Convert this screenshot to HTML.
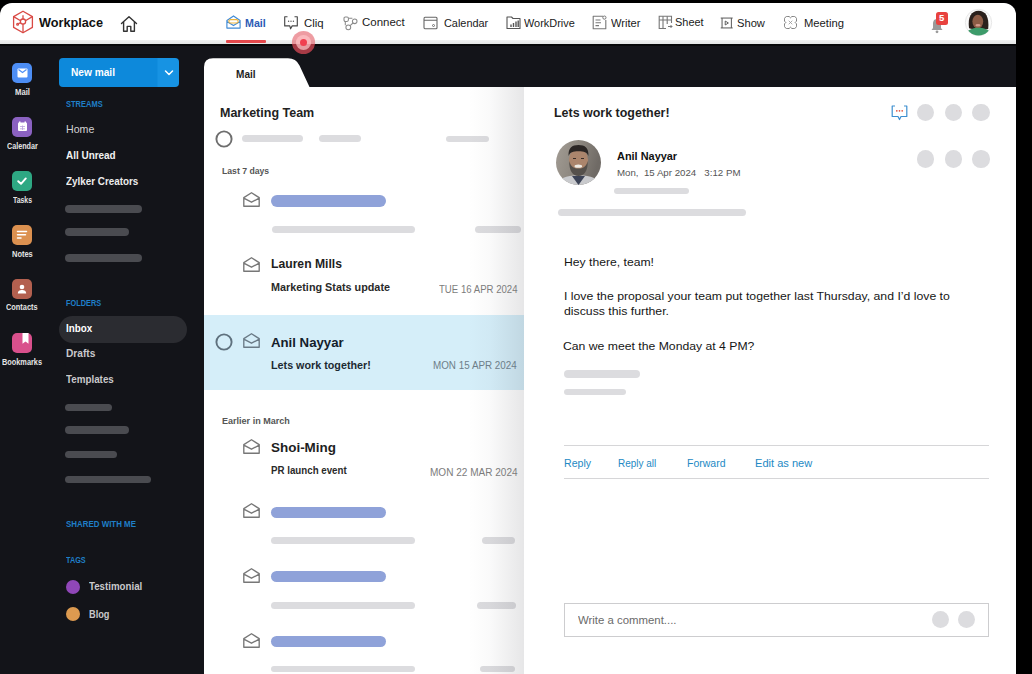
<!DOCTYPE html>
<html><head><meta charset="utf-8"><style>
html,body{margin:0;padding:0;}
body{width:1032px;height:674px;background:#000;position:relative;overflow:hidden;font-family:"Liberation Sans", sans-serif;}
.a{position:absolute;}
.tx{position:absolute;white-space:nowrap;line-height:1;transform-origin:0 0;}
.bar{position:absolute;border-radius:4px;background:#dcdcdf;}
.dbar{position:absolute;border-radius:4px;background:#4a4b50;}
.bbar{position:absolute;border-radius:6px;background:#8fa2d9;}
.circ{position:absolute;border-radius:50%;background:#dcdcdf;}
</style></head><body>
<!-- screen -->
<div class="a" style="left:0;top:3px;width:1016px;height:700px;background:#131419;border-radius:12px 12px 0 0;overflow:hidden;">
  <div class="a" style="left:0;top:0;width:1016px;height:44px;background:linear-gradient(to bottom,#fff 0px,#fff 37.4px,#eef0f0 37.4px,#e3e5e5 41px,#050608 41px,#07080a 42.6px,#131419 42.6px);"></div>
</div>
<!-- logo -->
<svg class="a" style="left:12px;top:10px" width="22" height="24" viewBox="0 0 22 24">
  <g fill="none" stroke="#d94a45" stroke-width="1.3" stroke-linejoin="round">
    <path d="M11 1.2 L20.4 6.6 V17.4 L11 22.8 L1.6 17.4 V6.6 Z"/>
    <path d="M1.6 6.6 L8.6 10.8 M20.4 6.6 L13.4 10.8 M11 13.4 V22.8"/>
    <circle cx="11" cy="11.6" r="2.6"/>
    <path d="M11 5.2 V9"/>
    <circle cx="5.6" cy="14.2" r="0.9"/>
    <path d="M6.4 13.6 L8.8 12.6"/>
  </g>
</svg>
<!-- home icon -->
<svg class="a" style="left:120px;top:15px" width="18" height="18" viewBox="0 0 18 18">
  <path d="M1.5 8.6 L9 1.8 L16.5 8.6 M3.6 7 V16.2 H7.2 V11.4 H10.8 V16.2 H14.4 V7" fill="none" stroke="#333" stroke-width="1.4" stroke-linejoin="round" stroke-linecap="round"/>
</svg>
<!-- nav icons -->
<svg class="a" style="left:225.5px;top:15.3px" width="15" height="14" viewBox="0 0 15 14">
  <path d="M0.9 5.4 L7.5 0.9 L14.1 5.4 V13.1 H0.9 Z M0.9 6.6 L7.5 10.6 L14.1 6.6" fill="none" stroke="#3f8ad6" stroke-width="1.15" stroke-linejoin="round"/>
  <rect x="2.9" y="4.6" width="9.2" height="3.4" rx="1.6" fill="none" stroke="#efb53c" stroke-width="1.1"/>
</svg>
<svg class="a" style="left:283.8px;top:15.8px" width="14" height="14" viewBox="0 0 14 14">
  <path d="M3.5 0.7 H0.7 V9.9 H5.8 L6.6 12.8 L8.2 9.9 H13.3 V0.7 H10.5" fill="none" stroke="#484848" stroke-width="1.15" stroke-linejoin="round"/>
  <circle cx="4.6" cy="5.2" r="0.7" fill="#555"/><circle cx="7" cy="5.2" r="0.7" fill="#555"/><circle cx="9.4" cy="5.2" r="0.7" fill="#555"/>
</svg>
<svg class="a" style="left:343px;top:15.5px" width="15" height="15" viewBox="0 0 15 15">
  <g fill="none" stroke="#8a8a8a" stroke-width="1.05">
    <rect x="1" y="1" width="4.4" height="4.4" rx="1.3"/>
    <circle cx="11.7" cy="5.3" r="2.3"/>
    <circle cx="5.3" cy="11.3" r="2.4"/>
    <path d="M5.6 2.2 H9.4 M2.3 5.6 V9.2 M7.1 9.6 L10 7"/>
  </g>
</svg>
<svg class="a" style="left:423px;top:16px" width="15" height="14" viewBox="0 0 15 14">
  <path d="M2 1.2 H13 Q14 1.2 14 2.2 V11.8 Q14 12.8 13 12.8 H2.4 Q1 12.8 1 11.4 V3 Q1 1.2 2 1.2 Z M1 4.2 H14" fill="none" stroke="#666" stroke-width="1.1"/>
  <circle cx="10.5" cy="9.5" r="1" fill="none" stroke="#666" stroke-width="0.9"/>
</svg>
<svg class="a" style="left:506px;top:15px" width="15" height="15" viewBox="0 0 15 15">
  <path d="M1 13.5 V2 H5.5 L7 3.5 H14 V13.5 Z" fill="none" stroke="#555" stroke-width="1.1" stroke-linejoin="round"/>
  <path d="M5 12 V9.5 M7.5 12 V8 M10 12 V6.5 M12.2 12 V5.5" stroke="#555" stroke-width="1.4"/>
</svg>
<svg class="a" style="left:592px;top:15px" width="15" height="15" viewBox="0 0 15 15">
  <path d="M11 1.2 H1.2 V13.8 H13.8 V5" fill="none" stroke="#777" stroke-width="1.1" stroke-linejoin="round"/>
  <path d="M3.5 5 H8.5 M3.5 7.8 H9 M3.5 10.6 H7" stroke="#777" stroke-width="1.1"/>
  <circle cx="12.4" cy="2.6" r="1.6" fill="none" stroke="#777" stroke-width="1"/>
</svg>
<svg class="a" style="left:658px;top:15px" width="15" height="15" viewBox="0 0 15 15">
  <path d="M13.5 8 V1.2 H1.2 V13.5 H8" fill="none" stroke="#777" stroke-width="1.1"/>
  <path d="M1.2 5 H13.5 M5 1.2 V13.5 M9.2 1.2 V9" stroke="#777" stroke-width="1.1"/>
  <path d="M10 11.5 H14 M12.5 10 L14 11.5 L12.5 13" fill="none" stroke="#777" stroke-width="1"/>
</svg>
<svg class="a" style="left:720.3px;top:16.6px" width="14" height="12" viewBox="0 0 15 12.6">
  <path d="M0.8 1 H13.6 M0.8 11.6 H13.6 M2.2 1 V11.6 M12.2 1 V11.6" stroke="#555" stroke-width="1.05"/>
  <path d="M5.6 4.2 L9 6.3 L5.6 8.4 Z" fill="none" stroke="#555" stroke-width="1" stroke-linejoin="round"/>
</svg>
<svg class="a" style="left:784px;top:16.2px" width="13" height="13" viewBox="0.6 0.6 13.8 13.8">
  <path d="M7.5 2.51 A3.6 3.6 0 1 1 12.49 7.5 A3.6 3.6 0 1 1 7.5 12.49 A3.6 3.6 0 1 1 2.51 7.5 A3.6 3.6 0 1 1 7.5 2.51 Z" fill="none" stroke="#7a7a7a" stroke-width="1.05"/>
  <path d="M5.6 5.6 L9.4 9.4 M9.4 5.6 L5.6 9.4" stroke="#9a9a9a" stroke-width="0.9"/>
</svg>
<!-- mail underline + touch dot -->
<div class="a" style="left:226px;top:40px;width:40px;height:3px;background:#e4484c;border-radius:1px;"></div>
<svg class="a" style="left:291px;top:30px" width="25" height="25" viewBox="0 0 25 25">
  <defs><clipPath id="tp"><rect x="0" y="0" width="25" height="14"/></clipPath><clipPath id="bt"><rect x="0" y="14" width="25" height="11"/></clipPath></defs>
  <circle cx="12.5" cy="12.5" r="11.6" fill="rgba(228,95,105,0.62)" clip-path="url(#tp)"/>
  <circle cx="12.5" cy="12.5" r="11.6" fill="rgba(225,75,88,0.72)" clip-path="url(#bt)"/>
  <circle cx="12.5" cy="12.5" r="7.6" fill="rgba(255,195,198,0.72)"/>
  <circle cx="12.5" cy="12.5" r="3.5" fill="#f04050"/>
</svg>
<!-- bell + badge -->
<svg class="a" style="left:930px;top:17px" width="14" height="17" viewBox="0 0 14 17">
  <path d="M7 2 C3.5 2 3 5 3 7.5 V11 L1.5 13 H12.5 L11 11 V7.5 C11 5 10.5 2 7 2 Z" fill="#9a9a9a"/>
  <circle cx="7" cy="14.8" r="1.4" fill="#9a9a9a"/>
</svg>
<div class="a" style="left:935.5px;top:12px;width:12.5px;height:12.5px;border-radius:2.5px;background:#e8423f;color:#fff;font-size:9.5px;font-weight:700;line-height:12.5px;text-align:center;font-family:'Liberation Sans',sans-serif;">5</div>
<!-- avatar woman -->
<svg class="a" style="left:964px;top:8px" width="30" height="30" viewBox="0 0 30 30">
  <defs><clipPath id="cw"><circle cx="14.5" cy="14.5" r="13"/></clipPath></defs>
  <circle cx="14.5" cy="14.5" r="13.2" fill="#fafafa" stroke="#e2e2e2" stroke-width="0.8"/>
  <g clip-path="url(#cw)">
    <path d="M5 20 C3.5 9 7.5 2.8 14.5 2.8 C21.5 2.8 25.5 9 24.2 21 C22 22 8 22 5 20 Z" fill="#2a201c"/>
    <ellipse cx="13.8" cy="13.6" rx="5.4" ry="6.8" fill="#8d5c46"/>
    <ellipse cx="14" cy="17.2" rx="2.6" ry="1.3" fill="#d49a8c"/>
    <path d="M-1 31 C0 23 8 19.8 14.5 19.8 C21 19.8 29 23 30 31 Z" fill="#3d9b6a"/>
  </g>
</svg>
<!-- left rail icons -->
<div class="a" style="left:12px;top:63px;width:20px;height:20px;border-radius:5px;background:#4d8ef5;"></div>
<svg class="a" style="left:16.5px;top:67.5px" width="11" height="10" viewBox="0 0 11 10"><rect x="0.5" y="0.5" width="10" height="9" rx="1" fill="#fff"/><path d="M1.5 1.6 L5.5 4.6 L9.5 1.6" fill="none" stroke="#4d8ef5" stroke-width="1.2"/></svg>
<div class="a" style="left:12px;top:117px;width:20px;height:20px;border-radius:5px;background:#8b62c1;"></div>
<svg class="a" style="left:16.5px;top:121px" width="11" height="11" viewBox="0 0 11 11"><rect x="1" y="1.5" width="9" height="8.5" rx="1" fill="#fff"/><rect x="2" y="0.5" width="1.5" height="2" fill="#fff"/><rect x="7.5" y="0.5" width="1.5" height="2" fill="#fff"/><path d="M3 5.5 H8 M3 7.8 H8 M5.5 4.5 V9" stroke="#b9a0dd" stroke-width="0.8"/></svg>
<div class="a" style="left:12px;top:171px;width:20px;height:20px;border-radius:5px;background:#2ea883;"></div>
<svg class="a" style="left:15px;top:174px" width="14" height="14" viewBox="0 0 14 14"><path d="M3.2 7.2 L6 9.8 L10.8 4.4" fill="none" stroke="#fff" stroke-width="1.9" stroke-linecap="round" stroke-linejoin="round"/></svg>
<div class="a" style="left:12px;top:225px;width:20px;height:20px;border-radius:5px;background:#dc9150;"></div>
<svg class="a" style="left:16px;top:229px" width="12" height="12" viewBox="0 0 12 12"><path d="M1.5 2.5 H10.5 M1.5 5.8 H9.5 M1.5 9 H5" stroke="#fff" stroke-width="1.5" stroke-linecap="round"/></svg>
<div class="a" style="left:12px;top:279px;width:20px;height:20px;border-radius:5px;background:#b3604f;"></div>
<svg class="a" style="left:16px;top:283px" width="12" height="12" viewBox="0 0 12 12"><circle cx="6" cy="4" r="2.3" fill="#fff"/><path d="M1.8 10.5 C2 7.6 4 7 6 7 C8 7 10 7.6 10.2 10.5 Z" fill="#fff"/></svg>
<div class="a" style="left:12px;top:333px;width:20px;height:20px;border-radius:5px;background:#d9508c;"></div>
<svg class="a" style="left:21.5px;top:333px" width="7" height="12" viewBox="0 0 7 12"><path d="M0.5 0 H6.5 V10.8 L3.5 8.4 L0.5 10.8 Z" fill="#fff"/></svg>

<!-- sidebar -->
<div class="a" style="left:58.5px;top:58px;width:120.5px;height:29px;border-radius:4px;background:linear-gradient(to right,#0d89db 0,#0d89db 98px,#1793e3 99px);"></div>
<svg class="a" style="left:163.5px;top:69.3px" width="10" height="8" viewBox="0 0 10 8"><path d="M1.5 2 L5 5.5 L8.5 2" fill="none" stroke="#fff" stroke-width="1.5" stroke-linecap="round" stroke-linejoin="round"/></svg>
<div class="dbar" style="left:65px;top:205px;width:77px;height:8px;"></div>
<div class="dbar" style="left:65px;top:228px;width:64px;height:7.5px;"></div>
<div class="dbar" style="left:65px;top:253.5px;width:77px;height:8px;"></div>
<div class="a" style="left:58.5px;top:316px;width:128.5px;height:27px;border-radius:13.5px;background:#2b2c31;"></div>
<div class="dbar" style="left:65px;top:403.5px;width:47px;height:7.5px;"></div>
<div class="dbar" style="left:65px;top:426px;width:64px;height:7.5px;"></div>
<div class="dbar" style="left:65px;top:450.7px;width:52px;height:7.5px;"></div>
<div class="dbar" style="left:65px;top:476px;width:86px;height:7px;"></div>
<div class="a" style="left:65.5px;top:579.5px;width:14px;height:14px;border-radius:50%;background:#9047b8;"></div>
<div class="a" style="left:65.5px;top:607px;width:14px;height:14px;border-radius:50%;background:#dc9a50;"></div>

<!-- list panel -->
<svg class="a" style="left:204px;top:58px" width="320" height="30" viewBox="0 0 320 30">
  <path d="M0 30 V9 Q0 0.3 9 0.3 H84 Q92 0.3 95.5 7.5 L105.6 29.2 H320 V30 Z" fill="#fff"/>
</svg>
<div class="a" style="left:204px;top:87px;width:320px;height:600px;background:#fff;"></div>
<div class="a" style="left:204px;top:315px;width:320px;height:75px;background:#d5eef9;"></div>
<svg class="a" style="left:214.5px;top:129.8px" width="18" height="18" viewBox="0 0 18 18"><circle cx="9" cy="9" r="7.6" fill="none" stroke="#6e6e6e" stroke-width="1.9"/></svg>
<div class="bar" style="left:241.6px;top:135.3px;width:61.4px;height:6.7px;"></div>
<div class="bar" style="left:318.6px;top:135.3px;width:42.4px;height:6.7px;"></div>
<div class="bar" style="left:446px;top:135.8px;width:43px;height:6.5px;"></div>
<svg class="a" style="left:214.8px;top:332.8px" width="18" height="18" viewBox="0 0 18 18"><circle cx="9" cy="9" r="7.6" fill="none" stroke="#5f717e" stroke-width="1.9"/></svg>
<svg class="a" style="left:242.5px;top:192.0px" width="17" height="15" viewBox="0 0 17 15"><path d="M0.8 5.6 L8.5 0.8 L16.2 5.6 V14.2 H0.8 Z M0.8 6.2 L8.5 10.2 L16.2 6.2" fill="none" stroke="#777" stroke-width="1.35" stroke-linejoin="round"/></svg>
<svg class="a" style="left:242.5px;top:257.0px" width="17" height="15" viewBox="0 0 17 15"><path d="M0.8 5.6 L8.5 0.8 L16.2 5.6 V14.2 H0.8 Z M0.8 6.2 L8.5 10.2 L16.2 6.2" fill="none" stroke="#777" stroke-width="1.35" stroke-linejoin="round"/></svg>
<svg class="a" style="left:243.0px;top:333.0px" width="17" height="15" viewBox="0 0 17 15"><path d="M0.8 5.6 L8.5 0.8 L16.2 5.6 V14.2 H0.8 Z M0.8 6.2 L8.5 10.2 L16.2 6.2" fill="none" stroke="#6a7a86" stroke-width="1.35" stroke-linejoin="round"/></svg>
<svg class="a" style="left:242.5px;top:438.5px" width="17" height="15" viewBox="0 0 17 15"><path d="M0.8 5.6 L8.5 0.8 L16.2 5.6 V14.2 H0.8 Z M0.8 6.2 L8.5 10.2 L16.2 6.2" fill="none" stroke="#777" stroke-width="1.35" stroke-linejoin="round"/></svg>
<svg class="a" style="left:242.5px;top:503.0px" width="17" height="15" viewBox="0 0 17 15"><path d="M0.8 5.6 L8.5 0.8 L16.2 5.6 V14.2 H0.8 Z M0.8 6.2 L8.5 10.2 L16.2 6.2" fill="none" stroke="#777" stroke-width="1.35" stroke-linejoin="round"/></svg>
<svg class="a" style="left:242.5px;top:568.0px" width="17" height="15" viewBox="0 0 17 15"><path d="M0.8 5.6 L8.5 0.8 L16.2 5.6 V14.2 H0.8 Z M0.8 6.2 L8.5 10.2 L16.2 6.2" fill="none" stroke="#777" stroke-width="1.35" stroke-linejoin="round"/></svg>
<svg class="a" style="left:242.5px;top:632.5px" width="17" height="15" viewBox="0 0 17 15"><path d="M0.8 5.6 L8.5 0.8 L16.2 5.6 V14.2 H0.8 Z M0.8 6.2 L8.5 10.2 L16.2 6.2" fill="none" stroke="#777" stroke-width="1.35" stroke-linejoin="round"/></svg>
<div class="bbar" style="left:271px;top:195.4px;width:115.3px;height:11.6px;"></div>
<div class="bar" style="left:271.5px;top:226px;width:143.5px;height:7px;"></div>
<div class="bar" style="left:475px;top:226px;width:45.7px;height:7px;"></div>
<div class="bbar" style="left:270.7px;top:506.8px;width:115px;height:11px;"></div>
<div class="bar" style="left:271px;top:537px;width:144px;height:7px;"></div>
<div class="bar" style="left:482.3px;top:537px;width:32.7px;height:6.6px;"></div>
<div class="bbar" style="left:270.7px;top:571px;width:115px;height:11px;"></div>
<div class="bar" style="left:271px;top:602px;width:144px;height:6.5px;"></div>
<div class="bar" style="left:477px;top:602px;width:38.6px;height:6.5px;"></div>
<div class="bbar" style="left:270.7px;top:635.8px;width:115px;height:11px;"></div>
<div class="bar" style="left:271px;top:666px;width:144px;height:6px;"></div>
<div class="bar" style="left:480px;top:666px;width:35px;height:6px;"></div>
<div class="a" style="left:468px;top:87px;width:56px;height:600px;background:linear-gradient(to right,rgba(30,30,40,0),rgba(30,30,40,0.025) 40%,rgba(30,30,40,0.11));"></div>

<!-- reading pane -->
<div class="a" style="left:524px;top:87px;width:492px;height:600px;background:#fff;"></div>
<svg class="a" style="left:891px;top:105px" width="17" height="16" viewBox="0 0 17 16">
  <path d="M4 1 H1.2 V11.5 H7 L8.5 14.5 L10 11.5 H15.8 V1 H13" fill="none" stroke="#3d8fd0" stroke-width="1.2" stroke-linejoin="round"/>
  <circle cx="5.8" cy="5.8" r="0.85" fill="#e0503c"/><circle cx="8.5" cy="5.8" r="0.85" fill="#e0503c"/><circle cx="11.2" cy="5.8" r="0.85" fill="#e0503c"/>
</svg>
<div class="circ" style="left:917px;top:103.8px;width:17.4px;height:17.4px;"></div>
<div class="circ" style="left:944.6px;top:103.8px;width:17.4px;height:17.4px;"></div>
<div class="circ" style="left:972.2px;top:103.8px;width:17.4px;height:17.4px;"></div>
<div class="circ" style="left:917px;top:150.4px;width:17.4px;height:17.4px;"></div>
<div class="circ" style="left:944.6px;top:150.4px;width:17.4px;height:17.4px;"></div>
<div class="circ" style="left:972.2px;top:150.4px;width:17.4px;height:17.4px;"></div>
<!-- man avatar -->
<svg class="a" style="left:556px;top:140.4px" width="45" height="45" viewBox="0 0 45 45">
  <defs><clipPath id="cm"><circle cx="22.5" cy="22.5" r="22.5"/></clipPath>
  <linearGradient id="bgm" x1="0" y1="0" x2="1" y2="0.3"><stop offset="0" stop-color="#a39d95"/><stop offset="0.5" stop-color="#8e8880"/><stop offset="1" stop-color="#6f6a65"/></linearGradient></defs>
  <g clip-path="url(#cm)">
    <rect width="45" height="45" fill="url(#bgm)"/>
    <path d="M2 45 C3 38 9 35.5 22.5 35.5 C36 35.5 42 38 43 45 Z" fill="#c9cacd"/>
    <path d="M16 36 L22.5 45 L29 36 Z" fill="#3c4356"/>
    <ellipse cx="22.5" cy="20" rx="9.6" ry="11.5" fill="#ab856c"/>
    <path d="M12.6 16 C12 8 16 5 22.5 5 C29 5 33 8 32.4 16 C31 12 28 11.2 22.5 11.2 C17 11.2 14 12 12.6 16 Z" fill="#2b2624"/>
    <path d="M13.2 21 C13 31 17 36 22.5 36 C28 36 32 31 31.8 21 C30 27 27 28.5 22.5 28.5 C18 28.5 15 27 13.2 21 Z" fill="#55504b"/>
    <ellipse cx="22.3" cy="26.2" rx="3.8" ry="1.6" fill="#efebe4"/>
    <path d="M17 18.5 h3 M25 18.5 h3" stroke="#3a2e28" stroke-width="1.2"/>
  </g>
</svg>
<div class="bar" style="left:614px;top:187.6px;width:75.4px;height:6.6px;"></div>
<div class="bar" style="left:558px;top:208.7px;width:188.4px;height:7.3px;"></div>
<div class="bar" style="left:564px;top:370.3px;width:76px;height:7.3px;"></div>
<div class="bar" style="left:564px;top:389px;width:62.3px;height:6px;"></div>
<div class="a" style="left:564px;top:445px;width:425px;height:1.3px;background:#d6d6d8;"></div>
<div class="a" style="left:564px;top:478.2px;width:425px;height:1.3px;background:#d6d6d8;"></div>
<div class="a" style="left:564px;top:603.4px;width:422.5px;height:32px;border:1px solid #cdcdcf;"></div>
<div class="circ" style="left:932px;top:611px;width:17.3px;height:17.3px;"></div>
<div class="circ" style="left:957.5px;top:611px;width:17.3px;height:17.3px;"></div>

<div class='tx' style='left:39.3px;top:17.00px;font-size:12.01px;font-weight:700;color:#111;transform:scaleX(1.058);'>Workplace</div><div class='tx' style='left:244.6px;top:18.00px;font-size:11.45px;font-weight:700;color:#2d5bb5;transform:scaleX(0.935);'>Mail</div><div class='tx' style='left:304.0px;top:18.00px;font-size:11.45px;font-weight:400;color:#1a1a1a;transform:scaleX(0.995);'>Cliq</div><div class='tx' style='left:361.6px;top:17.00px;font-size:11.45px;font-weight:400;color:#1a1a1a;transform:scaleX(1.002);'>Connect</div><div class='tx' style='left:444.1px;top:18.00px;font-size:11.45px;font-weight:400;color:#1a1a1a;transform:scaleX(0.952);'>Calendar</div><div class='tx' style='left:523.9px;top:18.00px;font-size:11.45px;font-weight:400;color:#1a1a1a;transform:scaleX(0.955);'>WorkDrive</div><div class='tx' style='left:611.0px;top:18.00px;font-size:11.45px;font-weight:400;color:#1a1a1a;transform:scaleX(0.974);'>Writer</div><div class='tx' style='left:674.7px;top:17.00px;font-size:11.45px;font-weight:400;color:#1a1a1a;transform:scaleX(0.957);'>Sheet</div><div class='tx' style='left:737.4px;top:18.00px;font-size:11.45px;font-weight:400;color:#1a1a1a;transform:scaleX(0.975);'>Show</div><div class='tx' style='left:804.4px;top:18.00px;font-size:11.45px;font-weight:400;color:#1a1a1a;transform:scaleX(0.983);'>Meeting</div><div class='tx' style='left:14.7px;top:88.00px;font-size:8.38px;font-weight:700;color:#e4e4e4;transform:scaleX(0.920);'>Mail</div><div class='tx' style='left:6.8px;top:142.00px;font-size:8.38px;font-weight:700;color:#e4e4e4;transform:scaleX(0.859);'>Calendar</div><div class='tx' style='left:12.7px;top:196.00px;font-size:8.38px;font-weight:700;color:#e4e4e4;transform:scaleX(0.822);'>Tasks</div><div class='tx' style='left:11.8px;top:250.00px;font-size:8.38px;font-weight:700;color:#e4e4e4;transform:scaleX(0.893);'>Notes</div><div class='tx' style='left:6.4px;top:303.00px;font-size:8.38px;font-weight:700;color:#e4e4e4;transform:scaleX(0.882);'>Contacts</div><div class='tx' style='left:2.2px;top:358.00px;font-size:8.38px;font-weight:700;color:#e4e4e4;transform:scaleX(0.877);'>Bookmarks</div><div class='tx' style='left:71.0px;top:67.00px;font-size:10.73px;font-weight:700;color:#ffffff;transform:scaleX(0.947);'>New mail</div><div class='tx' style='left:65.6px;top:100.00px;font-size:8.94px;font-weight:700;color:#1f7fc8;transform:scaleX(0.841);'>STREAMS</div><div class='tx' style='left:65.6px;top:124.00px;font-size:11.13px;font-weight:400;color:#d2d2d4;transform:scaleX(0.953);'>Home</div><div class='tx' style='left:65.6px;top:150.00px;font-size:11.26px;font-weight:700;color:#f2f2f2;transform:scaleX(0.883);'>All Unread</div><div class='tx' style='left:65.6px;top:176.00px;font-size:11.26px;font-weight:700;color:#ececec;transform:scaleX(0.876);'>Zylker Creators</div><div class='tx' style='left:65.6px;top:299.00px;font-size:9.22px;font-weight:700;color:#1f7fc8;transform:scaleX(0.799);'>FOLDERS</div><div class='tx' style='left:65.6px;top:324.00px;font-size:10.46px;font-weight:700;color:#ffffff;transform:scaleX(0.940);'>Inbox</div><div class='tx' style='left:65.6px;top:349.00px;font-size:10.46px;font-weight:700;color:#c9c9cb;transform:scaleX(0.973);'>Drafts</div><div class='tx' style='left:65.6px;top:374.00px;font-size:11.13px;font-weight:700;color:#c9c9cb;transform:scaleX(0.882);'>Templates</div><div class='tx' style='left:65.5px;top:520.00px;font-size:8.94px;font-weight:700;color:#1f7fc8;transform:scaleX(0.888);'>SHARED WITH ME</div><div class='tx' style='left:65.5px;top:556.00px;font-size:8.94px;font-weight:700;color:#1f7fc8;transform:scaleX(0.817);'>TAGS</div><div class='tx' style='left:88.7px;top:581.00px;font-size:11.13px;font-weight:700;color:#c9c9cb;transform:scaleX(0.874);'>Testimonial</div><div class='tx' style='left:88.7px;top:609.00px;font-size:11.13px;font-weight:700;color:#c9c9cb;transform:scaleX(0.829);'>Blog</div><div class='tx' style='left:235.6px;top:69.00px;font-size:11.13px;font-weight:700;color:#1d1d1d;transform:scaleX(0.906);'>Mail</div><div class='tx' style='left:220.0px;top:106.00px;font-size:13.41px;font-weight:700;color:#222;transform:scaleX(0.932);'>Marketing Team</div><div class='tx' style='left:221.8px;top:166.00px;font-size:9.65px;font-weight:700;color:#555;transform:scaleX(0.900);'>Last 7 days</div><div class='tx' style='left:271.0px;top:257.00px;font-size:13.01px;font-weight:700;color:#1e1e1e;transform:scaleX(0.936);'>Lauren Mills</div><div class='tx' style='left:271.0px;top:281.00px;font-size:11.66px;font-weight:700;color:#2a2a2a;transform:scaleX(0.928);'>Marketing Stats update</div><div class='tx' style='left:439.0px;top:285.00px;font-size:10.47px;font-weight:400;color:#7c7c7c;transform:scaleX(0.918);'>TUE 16 APR 2024</div><div class='tx' style='left:270.7px;top:336.00px;font-size:13.68px;font-weight:700;color:#14202a;transform:scaleX(0.966);'>Anil Nayyar</div><div class='tx' style='left:270.7px;top:360.00px;font-size:11.13px;font-weight:700;color:#1c2a33;transform:scaleX(0.967);'>Lets work together!</div><div class='tx' style='left:433.4px;top:361.00px;font-size:10.34px;font-weight:400;color:#6d7e89;transform:scaleX(0.954);'>MON 15 APR 2024</div><div class='tx' style='left:221.7px;top:417.00px;font-size:8.98px;font-weight:700;color:#555;transform:scaleX(1.007);'>Earlier in March</div><div class='tx' style='left:271.1px;top:441.00px;font-size:13.41px;font-weight:700;color:#1e1e1e;transform:scaleX(1.003);'>Shoi-Ming</div><div class='tx' style='left:271.0px;top:465.00px;font-size:10.73px;font-weight:700;color:#2a2a2a;transform:scaleX(0.908);'>PR launch event</div><div class='tx' style='left:429.9px;top:468.00px;font-size:10.47px;font-weight:400;color:#7c7c7c;transform:scaleX(0.959);'>MON 22 MAR 2024</div><div class='tx' style='left:553.7px;top:106.00px;font-size:13.41px;font-weight:700;color:#1e1e1e;transform:scaleX(0.929);'>Lets work together!</div><div class='tx' style='left:616.5px;top:151.00px;font-size:11.40px;font-weight:700;color:#111;transform:scaleX(0.959);'>Anil Nayyar</div><div class='tx' style='left:616.5px;top:168.00px;font-size:9.92px;font-weight:400;color:#555;transform:scaleX(0.979);'>Mon,&nbsp; 15 Apr 2024&nbsp;&nbsp; 3:12 PM</div><div class='tx' style='left:563.5px;top:257.00px;font-size:11.40px;font-weight:400;color:#161616;transform:scaleX(1.068);'>Hey there, team!</div><div class='tx' style='left:563.5px;top:291.00px;font-size:11.40px;font-weight:400;color:#161616;transform:scaleX(1.076);'>I love the proposal your team put together last Thursday, and I’d love to</div><div class='tx' style='left:563.5px;top:306.00px;font-size:11.40px;font-weight:400;color:#161616;transform:scaleX(1.077);'>discuss this further.</div><div class='tx' style='left:563.3px;top:341.00px;font-size:11.40px;font-weight:400;color:#161616;transform:scaleX(1.072);'>Can we meet the Monday at 4 PM?</div><div class='tx' style='left:563.6px;top:458.00px;font-size:11.40px;font-weight:400;color:#2389c4;transform:scaleX(0.930);'>Reply</div><div class='tx' style='left:618.4px;top:458.00px;font-size:11.40px;font-weight:400;color:#2389c4;transform:scaleX(0.874);'>Reply all</div><div class='tx' style='left:686.5px;top:458.00px;font-size:11.40px;font-weight:400;color:#2389c4;transform:scaleX(0.921);'>Forward</div><div class='tx' style='left:755.4px;top:458.00px;font-size:11.40px;font-weight:400;color:#2389c4;transform:scaleX(0.971);'>Edit as new</div><div class='tx' style='left:577.5px;top:615.00px;font-size:11.53px;font-weight:400;color:#6a6a6a;transform:scaleX(0.989);'>Write a comment....</div>
</body></html>
